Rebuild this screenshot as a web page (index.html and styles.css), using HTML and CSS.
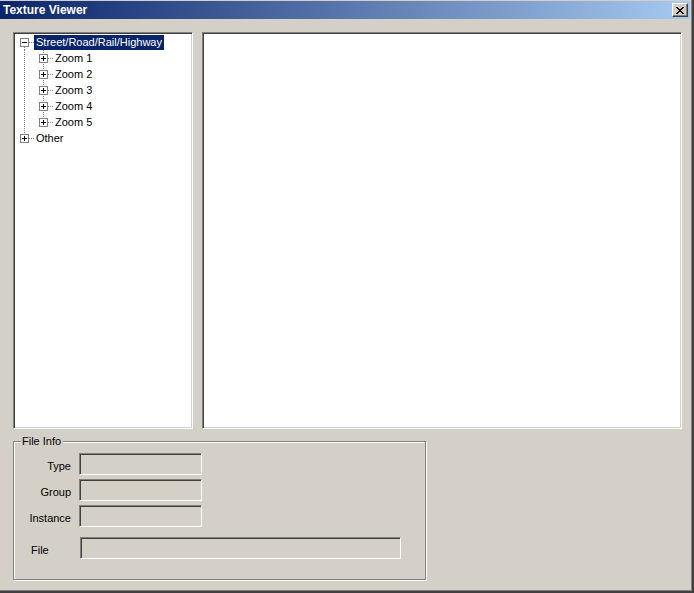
FILE: index.html
```html
<!DOCTYPE html>
<html>
<head>
<meta charset="utf-8">
<title>Texture Viewer</title>
<link rel="stylesheet" href="styles.css">
</head>
<body>
<div class="window">
  <div class="titlebar">
    <span class="title">Texture Viewer</span>
    <span class="close-btn">
      <svg width="8" height="7" viewBox="0 0 8 7" shape-rendering="crispEdges">
        <path d="M0 0h2v1h-2zM1 1h2v1h-2zM2 2h4v1h-4zM3 3h2v1h-2zM2 4h4v1h-4zM1 5h2v1h-2zM0 6h2v1h-2zM6 0h2v1h-2zM5 1h2v1h-2zM5 5h2v1h-2zM6 6h2v1h-2z" fill="#000"/>
      </svg>
    </span>
  </div>
  <div class="client">
    <div class="panes">
      <div class="sunken tree">
        <div class="row">
          <svg class="gutter" width="19" height="16" shape-rendering="crispEdges">
            <line x1="9.5" y1="13" x2="9.5" y2="16" class="dot"/>
            <line x1="14" y1="8.5" x2="19" y2="8.5" class="dot"/>
            <rect x="5.5" y="4.5" width="8" height="8" class="box"/>
            <line x1="7" y1="8.5" x2="12" y2="8.5" class="sign"/>
          </svg>
          <span class="label selected">Street/Road/Rail/Highway</span>
        </div>
        <div class="row">
          <svg class="gutter" width="38" height="16" shape-rendering="crispEdges">
            <line x1="9.5" y1="0" x2="9.5" y2="16" class="dot"/>
            <line x1="28.5" y1="0" x2="28.5" y2="16" class="dot"/>
            <line x1="33" y1="8.5" x2="38" y2="8.5" class="dot"/>
            <rect x="24.5" y="4.5" width="8" height="8" class="box"/>
            <line x1="26" y1="8.5" x2="31" y2="8.5" class="sign"/>
            <line x1="28.5" y1="6" x2="28.5" y2="11" class="sign"/>
          </svg>
          <span class="label">Zoom 1</span>
        </div>
        <div class="row">
          <svg class="gutter" width="38" height="16" shape-rendering="crispEdges">
            <line x1="9.5" y1="0" x2="9.5" y2="16" class="dot"/>
            <line x1="28.5" y1="0" x2="28.5" y2="16" class="dot"/>
            <line x1="33" y1="8.5" x2="38" y2="8.5" class="dot"/>
            <rect x="24.5" y="4.5" width="8" height="8" class="box"/>
            <line x1="26" y1="8.5" x2="31" y2="8.5" class="sign"/>
            <line x1="28.5" y1="6" x2="28.5" y2="11" class="sign"/>
          </svg>
          <span class="label">Zoom 2</span>
        </div>
        <div class="row">
          <svg class="gutter" width="38" height="16" shape-rendering="crispEdges">
            <line x1="9.5" y1="0" x2="9.5" y2="16" class="dot"/>
            <line x1="28.5" y1="0" x2="28.5" y2="16" class="dot"/>
            <line x1="33" y1="8.5" x2="38" y2="8.5" class="dot"/>
            <rect x="24.5" y="4.5" width="8" height="8" class="box"/>
            <line x1="26" y1="8.5" x2="31" y2="8.5" class="sign"/>
            <line x1="28.5" y1="6" x2="28.5" y2="11" class="sign"/>
          </svg>
          <span class="label">Zoom 3</span>
        </div>
        <div class="row">
          <svg class="gutter" width="38" height="16" shape-rendering="crispEdges">
            <line x1="9.5" y1="0" x2="9.5" y2="16" class="dot"/>
            <line x1="28.5" y1="0" x2="28.5" y2="16" class="dot"/>
            <line x1="33" y1="8.5" x2="38" y2="8.5" class="dot"/>
            <rect x="24.5" y="4.5" width="8" height="8" class="box"/>
            <line x1="26" y1="8.5" x2="31" y2="8.5" class="sign"/>
            <line x1="28.5" y1="6" x2="28.5" y2="11" class="sign"/>
          </svg>
          <span class="label">Zoom 4</span>
        </div>
        <div class="row">
          <svg class="gutter" width="38" height="16" shape-rendering="crispEdges">
            <line x1="9.5" y1="0" x2="9.5" y2="16" class="dot"/>
            <line x1="28.5" y1="0" x2="28.5" y2="5" class="dot"/>
            <line x1="33" y1="8.5" x2="38" y2="8.5" class="dot"/>
            <rect x="24.5" y="4.5" width="8" height="8" class="box"/>
            <line x1="26" y1="8.5" x2="31" y2="8.5" class="sign"/>
            <line x1="28.5" y1="6" x2="28.5" y2="11" class="sign"/>
          </svg>
          <span class="label">Zoom 5</span>
        </div>
        <div class="row">
          <svg class="gutter" width="19" height="16" shape-rendering="crispEdges">
            <line x1="9.5" y1="0" x2="9.5" y2="5" class="dot"/>
            <line x1="14" y1="8.5" x2="19" y2="8.5" class="dot"/>
            <rect x="5.5" y="4.5" width="8" height="8" class="box"/>
            <line x1="7" y1="8.5" x2="12" y2="8.5" class="sign"/>
            <line x1="9.5" y1="6" x2="9.5" y2="11" class="sign"/>
          </svg>
          <span class="label">Other</span>
        </div>
      </div>
      <div class="sunken viewer"></div>
    </div>
    <div class="group">
      <span class="legend">File Info</span>
      <div class="field">
        <span class="flabel">Type</span>
        <span class="input short"></span>
      </div>
      <div class="field">
        <span class="flabel">Group</span>
        <span class="input short"></span>
      </div>
      <div class="field">
        <span class="flabel">Instance</span>
        <span class="input short"></span>
      </div>
      <div class="field file-field">
        <span class="flabel file-label">File</span>
        <span class="input long"></span>
      </div>
    </div>
  </div>
</div>
</body>
</html>
```
FILE: styles.css
```css
* { box-sizing: border-box; }

html, body {
  margin: 0;
  padding: 0;
  background: #d4d0c8;
}

body {
  font-family: "Liberation Sans", Arial, sans-serif;
  font-size: 11px;
  color: #000;
}

.window {
  width: 694px;
  height: 593px;
  background: #d4d0c8;
  padding-top: 1px;
  box-shadow: inset -1px -1px 0 #404040, inset -2px -2px 0 #404040, inset -3px -3px 0 #808080;
  overflow: hidden;
}

.titlebar {
  height: 18px;
  width: 690px;
  display: flex;
  align-items: center;
  padding-left: 3px;
  padding-right: 2px;
  background: linear-gradient(to right, #0a246a, #a6caf0);
}

.title {
  color: #fff;
  font-weight: bold;
  font-size: 12px;
  line-height: 14px;
}

.close-btn {
  margin-left: auto;
  width: 16px;
  height: 14px;
  background: #d4d0c8;
  border: 1px solid;
  border-color: #fff #404040 #404040 #fff;
  box-shadow: inset -1px -1px 0 #808080;
  display: flex;
  align-items: center;
  justify-content: center;
  padding-right: 1px;
}

.close-btn svg { display: block; }

.client {
  padding: 13px 0 0 13px;
}

.panes {
  display: flex;
  gap: 9px;
  height: 397px;
}

.sunken {
  background: #fff;
  border: 1px solid;
  border-color: #808080 #fff #fff #808080;
  box-shadow: inset 1px 1px 0 #404040, inset -1px -1px 0 #d4d0c8;
  height: 397px;
}

.tree {
  width: 180px;
  padding: 1px 0 0 1px;
}

.viewer {
  width: 480px;
}

.row {
  display: flex;
  height: 16px;
  align-items: center;
}

.gutter {
  display: block;
  flex: none;
}

.dot {
  stroke: #808080;
  stroke-width: 1;
  stroke-dasharray: 1 1;
}

.box {
  fill: #fff;
  stroke: #808080;
  stroke-width: 1;
}

.sign {
  stroke: #000;
  stroke-width: 1;
}

.label {
  padding: 0 2px;
  height: 15px;
  line-height: 15px;
  white-space: nowrap;
}

.selected {
  background: #0a246a;
  color: #fff;
}

.group {
  position: relative;
  margin-top: 12px;
  width: 413px;
  height: 139px;
  border: 1px solid #808080;
  box-shadow: 1px 1px 0 #fff, inset 1px 1px 0 #fff;
  padding-top: 11px;
}

.legend {
  position: absolute;
  left: 7px;
  top: -7px;
  padding: 0 2px 0 1px;
  background: #d4d0c8;
  line-height: 13px;
}

.field {
  display: flex;
  align-items: center;
  gap: 8px;
  height: 22px;
  margin-bottom: 4px;
}

.file-field {
  margin-top: 10px;
}

.flabel {
  width: 57px;
  text-align: right;
  padding-top: 3px;
}

.file-label {
  width: 58px;
  text-align: left;
  padding-left: 17px;
}

.input {
  height: 22px;
  background: #d4d0c8;
  border: 1px solid;
  border-color: #808080 #fff #fff #808080;
  box-shadow: inset 1px 1px 0 #404040, inset -1px -1px 0 #d4d0c8;
}

.short { width: 123px; }
.long { width: 321px; }
```
